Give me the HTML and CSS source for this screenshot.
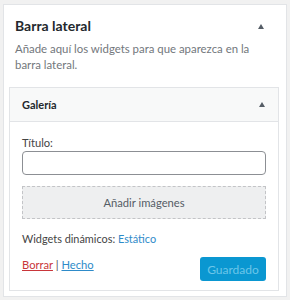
FILE: index.html
```html
<!DOCTYPE html>
<html lang="es">
<head>
  <meta charset="UTF-8" />
  <title>Barra lateral</title>
  <link rel="stylesheet" href="styles.css">
</head>
<body>
  <div class="sidebar">
    <div class="sidebar-head">
      <h2>Barra lateral</h2>
      <span class="toggle"></span>
    </div>
    <p class="desc">Añade aquí los widgets para que aparezca en la barra lateral.</p>

    <div class="widget">
      <div class="widget-top">
        <h3>Galería</h3>
        <span class="toggle"></span>
      </div>
      <div class="widget-inside">
        <label for="title">Título:</label>
        <input type="text" id="title" />
        <div class="add-images">Añadir imágenes</div>
        <p class="dynamic">Widgets dinámicos: <a href="#">Estático</a></p>
        <div class="widget-actions">
          <div class="links">
            <a href="#" class="delete">Borrar</a> | <a href="#" class="done">Hecho</a>
          </div>
          <button class="save" disabled>Guardado</button>
        </div>
      </div>
    </div>
  </div>
</body>
</html>
```

FILE: styles.css
```css
* {
  margin: 0;
  padding: 0;
  box-sizing: border-box;
}

body {
  background: #f1f1f1;
  font-family: "Lato", sans-serif;
  font-size: 11.2px;
  color: #444;
  padding: 4px 3px 0 3px;
}

.sidebar {
  background: #fff;
  border: 1px solid #e2e4e7;
  height: 293px;
  padding: 0 7px 0 5px;
}

.sidebar-head {
  display: flex;
  justify-content: space-between;
  align-items: center;
  height: 16px;
  margin-top: 13px;
  padding: 0 15px 0 6px;
}

.sidebar-head h2 {
  font-size: 14px;
  font-weight: 700;
  color: #23282d;
  line-height: 16px;
}

.toggle {
  width: 0;
  height: 0;
  border-left: 3.5px solid transparent;
  border-right: 3.5px solid transparent;
  border-bottom: 5px solid #555d66;
}

.desc {
  color: #72777c;
  line-height: 16px;
  font-size: 11.4px;
  padding: 0 6px;
  margin: 7px 0 14px 0;
}

.widget {
  border: 1px solid #e2e4e7;
  background: #fff;
}

.widget-top {
  background: #f8f9f9;
  border-bottom: 1px solid #e2e4e7;
  height: 34px;
  display: flex;
  justify-content: space-between;
  align-items: center;
  padding: 0 13px 0 12px;
}

.widget-top h3 {
  font-size: 11px;
  font-weight: 700;
  color: #23282d;
}

.widget-inside {
  padding: 13px 12px 9px 12px;
}

label {
  display: block;
  line-height: 16px;
}

input[type="text"] {
  display: block;
  width: 100%;
  height: 24px;
  border: 1px solid #8c8f94;
  border-radius: 4px;
}

.add-images {
  margin-top: 11px;
  height: 33px;
  border: 1px dashed #c3c4c7;
  background: #eeeff0;
  display: flex;
  align-items: center;
  justify-content: center;
  color: #555d66;
}

.dynamic {
  margin-top: 12px;
  line-height: 16px;
  font-size: 10.9px;
}

.dynamic a {
  color: #2e8bc9;
  text-decoration: none;
}

.widget-actions {
  display: flex;
  justify-content: space-between;
  align-items: flex-start;
  margin-top: 10px;
}

.links {
  color: #555;
  line-height: 16px;
}

.delete {
  color: #c9363a;
}

.done {
  color: #2e8bc9;
}

.save {
  width: 66px;
  height: 24px;
  border: none;
  border-radius: 3px;
  background: #0a97d1;
  color: #6cc6e9;
  font-family: "Lato", sans-serif;
  font-size: 12px;
}
```
